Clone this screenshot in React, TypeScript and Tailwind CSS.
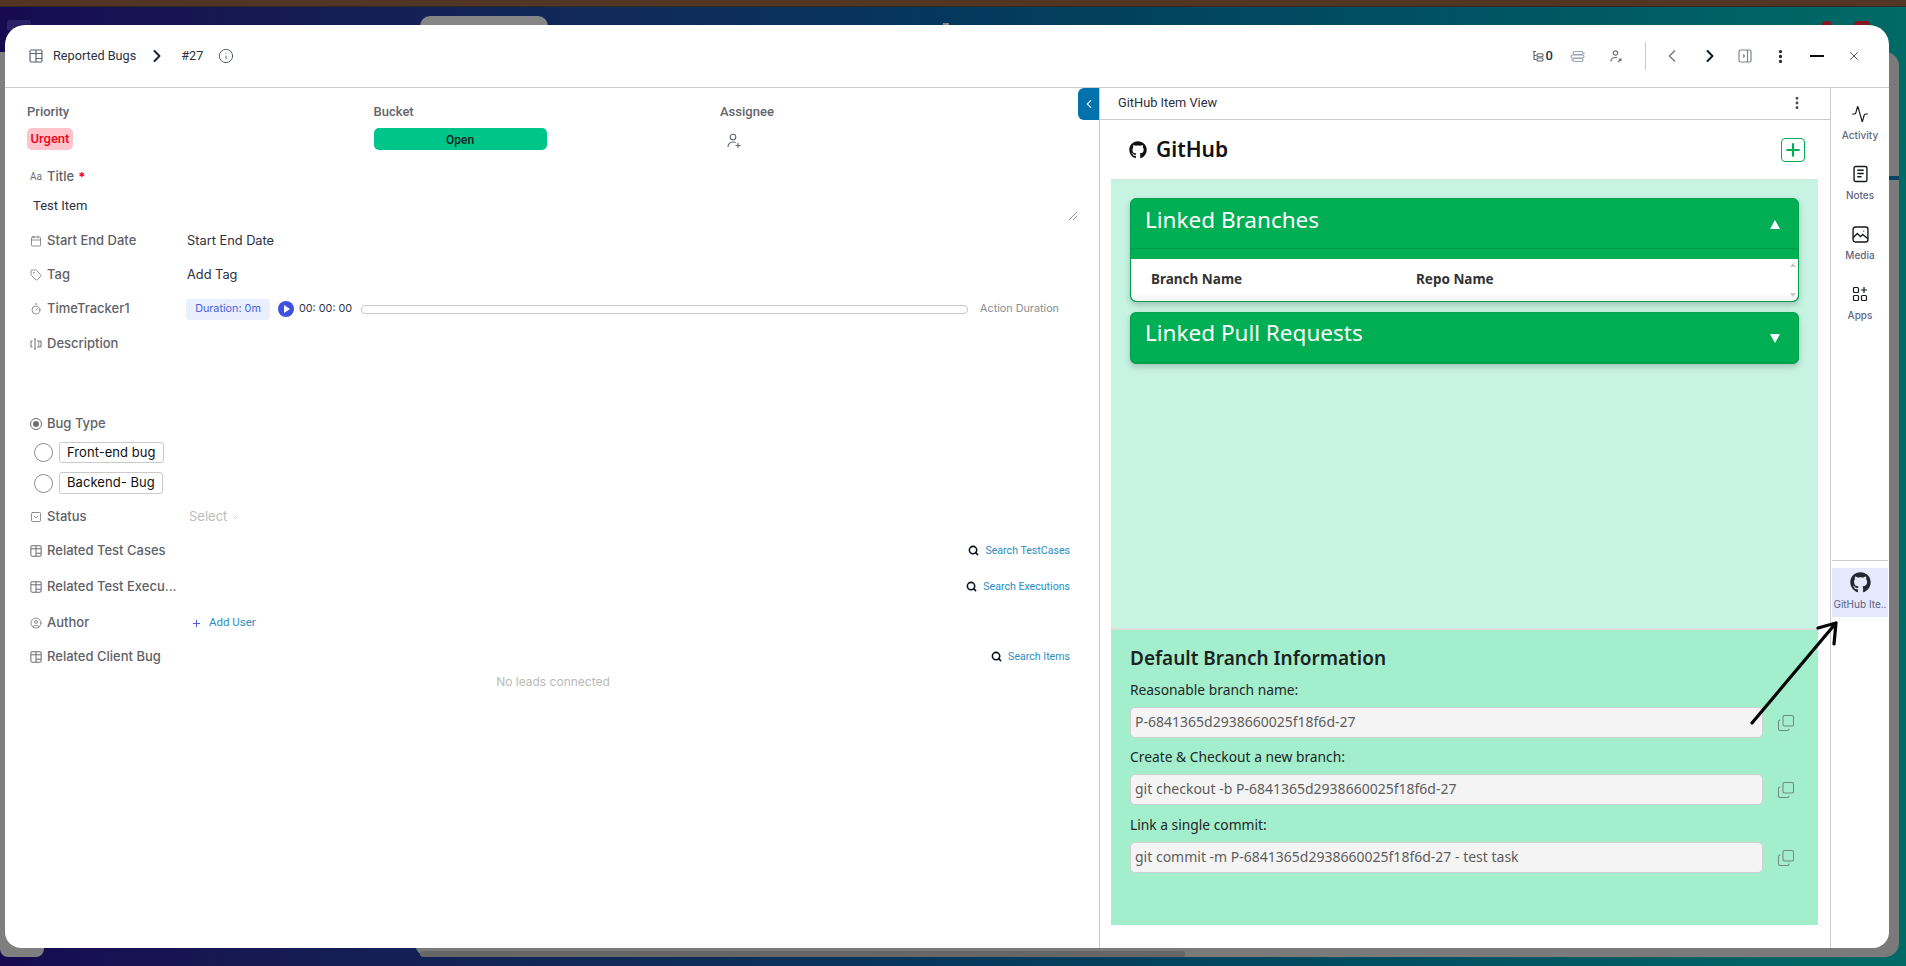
import type { ReactNode } from 'react';
import {
  Activity,
  Calendar,
  ChevronDown,
  ChevronLeft,
  ChevronRight,
  CircleUser,
  Copy,
  EllipsisVertical,
  Info,
  Plus,
  Search,
  SquareChevronDown,
  Tag,
  Timer,
  X,
} from 'lucide-react';
import { FaGithub } from 'react-icons/fa';

const ubuntu = "font-['Noto_Sans',sans-serif]";

function TableIcon({ className }: { className?: string }) {
  return (
    <svg viewBox="0 0 14 14" fill="none" stroke="currentColor" strokeWidth="1.2" className={className}>
      <rect x="1" y="1" width="12" height="12" rx="1.5" />
      <path d="M1 4.5h12M7 1v12M7 9.5h6" />
    </svg>
  );
}

function Row({ icon, label, children, className }: { icon: ReactNode; label: string; children?: ReactNode; className: string }) {
  return (
    <div className={`flex items-center pl-[25px] pr-[29px] ${className}`}>
      <span className="flex w-[12px] shrink-0 items-center justify-center text-[#6b6e75]">{icon}</span>
      <span className="ml-[5px] w-[140px] shrink-0 whitespace-nowrap text-[13px] font-medium text-[#5f6268]">{label}</span>
      {children}
    </div>
  );
}

function SearchLink({ label }: { label: string }) {
  return (
    <div className="ml-auto flex items-center gap-[6px] font-['Roboto',sans-serif] text-[10.6px] text-[#2a8cc0]">
      <Search className="h-[11px] w-[11px] text-[#0b1020]" strokeWidth={3.4} />
      {label}
    </div>
  );
}

function BugOption({ label, className }: { label: string; className: string }) {
  return (
    <div className={`ml-[29px] flex items-center gap-[6px] ${className}`}>
      <span className="h-[19px] w-[19px] rounded-full border border-[#8d8d8d]" />
      <span className="flex h-full items-center rounded-[3px] border border-[#c9c9c9] px-[7px] text-[13px] tracking-[0.05px] text-[#111]">{label}</span>
    </div>
  );
}

function HeaderTools() {
  return (
    <div className="ml-auto flex items-center">
      <svg viewBox="0 0 12 12" fill="none" stroke="#5d6470" strokeWidth="1.1" className="h-[12px] w-[12px]">
        <path d="M1 1.5h3M2 1.5v8h2.5M2 5.5h2.5" />
        <rect x="5" y="3.8" width="6" height="3" rx="1" />
        <rect x="5" y="8" width="6" height="3" rx="1" />
      </svg>
      <span className="ml-[2px] font-['Roboto',sans-serif] text-[13px] font-medium text-[#25324a]">0</span>
      <svg viewBox="0 0 16 12" fill="none" stroke="#98a3b5" strokeWidth="1.2" className="ml-[17px] h-[13px] w-[16px]">
        <rect x="3" y="1" width="10" height="3" rx="1.5" />
        <rect x="1" y="4.5" width="13" height="3" rx="1.5" />
        <rect x="3" y="8" width="10" height="3" rx="1.5" />
        <path d="M13 2.5h2M1 9.5h2" />
      </svg>
      <svg viewBox="0 0 12 13" fill="none" stroke="#6a7280" strokeWidth="1.2" className="ml-[24px] h-[13px] w-[12px]">
        <circle cx="5.5" cy="3" r="2.2" />
        <path d="M1 11.5c0-2.5 1.6-4 4.5-4 .6 0 1.2.1 1.6.2M8 12l3-3M9 9h2v2" />
      </svg>
      <span className="ml-[23px] h-[28px] w-px bg-[#c9cbd0]" />
      <ChevronLeft className="ml-[16px] h-[20px] w-[20px] text-[#7b8088]" strokeWidth={2} />
      <ChevronRight className="ml-[18px] h-[20px] w-[20px] text-[#111827]" strokeWidth={2.4} />
      <svg viewBox="0 0 14 14" fill="none" stroke="#7e8590" strokeWidth="1.2" className="ml-[18px] h-[14px] w-[14px]">
        <rect x="1" y="1" width="12" height="12" rx="1.5" />
        <path d="M9.5 1v12M5 5.5 6.5 7 5 8.5" />
      </svg>
      <EllipsisVertical className="ml-[20px] h-[17px] w-[17px] text-[#1c2230]" strokeWidth={2.6} />
      <span className="ml-[21px] h-[2px] w-[14px] bg-[#0c0c0c]" />
      <X className="ml-[23px] h-[14px] w-[14px] text-[#4b5563]" strokeWidth={1.7} />
    </div>
  );
}

function SideItem({ icon, label, className }: { icon: ReactNode; label: string; className?: string }) {
  return (
    <div className={`flex flex-col items-center text-[10px] font-medium text-[#62677f] ${className ?? ''}`}>
      <span className="flex h-[20px] items-center text-[#15181e]">{icon}</span>
      <span className="mt-[4px] leading-[14px]">{label}</span>
    </div>
  );
}

function BranchField({ label, value, className }: { label: string; value: string; className: string }) {
  return (
    <div className={className}>
      <div className="flex h-[20px] items-center text-[13.8px] text-[#1f2726]">{label}</div>
      <div className="mt-[7px] flex items-center">
        <div className="flex h-[31px] w-[633px] items-center rounded-[5px] border border-[#cfd2d1] bg-[#f4f4f4] pb-[2px] pl-[4px] text-[14px] text-[#5d5d5d]">{value}</div>
        <Copy className="ml-[14px] h-[18px] w-[18px] -scale-x-100 rotate-180 text-[#6f8a7f]" strokeWidth={1.4} />
      </div>
    </div>
  );
}

export default function App() {
  return (
    <div className="relative h-[966px] w-[1906px] overflow-hidden bg-gradient-to-r from-[#170a50] via-[#04385c] to-[#006a66] font-['Inter',sans-serif]">
      <div className="h-[7px] border-b border-[#2d2a26] bg-[#533524]" />

      {/* windows lying behind the dialog */}
      <div className="absolute left-0 top-[52px] h-[905px] w-[44px] rounded-b-[8px] bg-[#7f7f7f]" />
      <div className="absolute left-[415px] top-[52px] h-[905px] w-[1484px] rounded-[14px] bg-[#7a7a7a]" />
      <div className="absolute left-[420px] top-[16px] h-[30px] w-[128px] rounded-[10px] bg-[#868686]" />
      <div className="absolute left-[7px] top-[20px] h-[10px] w-[24px] rounded-t-[3px] bg-[#2a2168]" />
      <div className="absolute left-[943px] top-[23px] h-[4px] w-[6px] bg-[#8a8a8a]" />
      <div className="absolute left-[420px] top-[951px] h-[6px] w-[765px] rounded-[3px] bg-[#666]" />
      <div className="absolute left-[1889px] top-[176px] h-[4px] w-[10px] bg-[#054560]" />
      <div className="absolute left-[1822px] top-[21px] h-[8px] w-[10px] rounded-full bg-[#8b1520]" />
      <div className="absolute left-[1854px] top-[21px] h-[8px] w-[16px] rounded-full bg-[#8b1520]" />

      {/* dialog */}
      <div className="absolute left-[5px] top-[25px] flex h-[923px] w-[1884px] flex-col overflow-hidden rounded-b-[16px] rounded-t-[20px] bg-white">
        <header className="flex h-[63px] shrink-0 items-center border-b border-[#c9cbd0] pl-[24px] pr-[28px] font-['Roboto',sans-serif]">
          <TableIcon className="h-[14px] w-[14px] text-[#5b6270]" />
          <span className="ml-[10px] text-[12.7px] text-[#2b3040]">Reported Bugs</span>
          <ChevronRight className="ml-[11px] h-[20px] w-[20px] text-[#1b2235]" strokeWidth={2.4} />
          <span className="ml-[14px] text-[12.7px] text-[#2b3040]">#27</span>
          <Info className="ml-[15px] h-[16px] w-[16px] text-[#5c6270]" strokeWidth={1.5} />
          <HeaderTools />
        </header>

        <div className="flex min-h-0 flex-1">
          {/* left form */}
          <section className="w-[1094px] shrink-0">
            <div className="grid grid-cols-[346.5px_346.5px_1fr] pl-[22px] pt-[16px] font-['Roboto',sans-serif]">
              <div>
                <div className="text-[13px] font-medium leading-[16px] text-[#63666c]">Priority</div>
                <div className="mt-[8px] flex h-[22px] w-[46px] items-center justify-center rounded-[5px] bg-[#ffc4cb] text-[13px] font-medium text-[#f0021f]">Urgent</div>
              </div>
              <div>
                <div className="text-[13px] font-medium leading-[16px] text-[#63666c]">Bucket</div>
                <div className="mt-[8px] flex h-[22px] w-[173px] items-center justify-center rounded-[5px] bg-[#00c58a] pt-[1px] text-[12px] font-medium text-[#10231c]">Open</div>
              </div>
              <div>
                <div className="text-[13px] font-medium leading-[16px] text-[#63666c]">Assignee</div>
                <svg viewBox="0 0 16 16" fill="none" stroke="#5b6270" strokeWidth="1.1" className="ml-[6px] mt-[13px] h-[16px] w-[16px]">
                  <circle cx="7" cy="4" r="2.8" />
                  <path d="M2 14c0-3 2-5 5-5 1 0 2 .2 2.6.7M12 10v5M9.5 12.5h5" />
                </svg>
              </div>
            </div>

            <div className="mt-[16px] flex h-[22px] items-center pl-[25px]">
              <span className="w-[12px] font-['Roboto',sans-serif] text-[10px] leading-none text-[#6b6e75]">Aa</span>
              <span className="ml-[5px] text-[13px] font-medium text-[#5f6268]">Title</span>
              <span className="ml-[4px] text-[13px] font-bold leading-none text-[#f0021f]">*</span>
            </div>
            <div className="mt-[8px] flex h-[26px] items-start justify-between pl-[28px] pr-[22px]">
              <span className="flex h-[20px] items-center font-['Roboto',sans-serif] text-[13px] text-[#2b3040]">Test Item</span>
              <svg viewBox="0 0 8 8" stroke="#777" strokeWidth="0.8" className="mt-[16px] h-[8px] w-[8px]">
                <path d="M0 8 8 0M4 8l4-4" />
              </svg>
            </div>

            <Row className="mt-[2px] h-[34px]" icon={<Calendar className="h-[12px] w-[12px]" strokeWidth={1.5} />} label="Start End Date">
              <span className="text-[12.8px] text-[#2b3040]">Start End Date</span>
            </Row>
            <Row className="h-[34px]" icon={<Tag className="h-[12px] w-[12px]" strokeWidth={1.5} />} label="Tag">
              <span className="text-[12.8px] text-[#2b3040]">Add Tag</span>
            </Row>
            <Row className="h-[34px] !pr-[40px]" icon={<Timer className="h-[12px] w-[12px]" strokeWidth={1.5} />} label="TimeTracker1">
              <span className="-ml-[1px] flex h-[21px] w-[84px] items-center justify-center rounded-[4px] bg-[#e9effd] text-[10.8px] text-[#4a62dd]">Duration: 0m</span>
              <span className="ml-[8px] flex h-[16px] w-[16px] items-center justify-center rounded-full bg-[#3f51e0]">
                <span className="ml-[2px] h-0 w-0 border-y-[4px] border-l-[6px] border-y-transparent border-l-white" />
              </span>
              <span className="ml-[5px] text-[10.8px] text-[#30364a]">00: 00: 00</span>
              <span className="ml-[9px] h-[9px] flex-1 rounded-[4px] border border-[#c8c8c8]" />
              <span className="ml-[12px] text-[10.8px] text-[#8a8d93]">Action Duration</span>
            </Row>
            <Row
              className="h-[35px]"
              icon={
                <svg viewBox="0 0 12 12" fill="none" stroke="currentColor" strokeWidth="1" className="h-[12px] w-[12px]">
                  <path d="M2.5 3H1v6h1.5M5 1v10M4 1h2M4 11h2M7 3h4v6H7M8 5h1.5M8 7h1.5" />
                </svg>
              }
              label="Description"
            />

            <Row
              className="mt-[53px] h-[20px]"
              icon={
                <span className="flex h-[12px] w-[12px] items-center justify-center rounded-full border border-[#6b6e75]">
                  <span className="h-[6px] w-[6px] rounded-full bg-[#6b6e75]" />
                </span>
              }
              label="Bug Type"
            />
            <BugOption className="mt-[8px] h-[21px]" label="Front-end bug" />
            <BugOption className="mt-[9px] h-[22px]" label="Backend- Bug" />

            <Row className="mt-[6px] h-[34px]" icon={<SquareChevronDown className="h-[12px] w-[12px]" strokeWidth={1.5} />} label="Status">
              <span className="ml-[2px] flex items-center gap-[4px] text-[13px] text-[#bcbcbc]">
                Select <ChevronDown className="h-[9px] w-[9px]" />
              </span>
            </Row>
            <Row className="h-[34px]" icon={<TableIcon className="h-[12px] w-[12px]" />} label="Related Test Cases">
              <SearchLink label="Search TestCases" />
            </Row>
            <Row className="mt-[2px] h-[34px]" icon={<TableIcon className="h-[12px] w-[12px]" />} label="Related Test Execu...">
              <SearchLink label="Search Executions" />
            </Row>
            <Row className="mt-[2px] h-[34px]" icon={<CircleUser className="h-[12px] w-[12px]" strokeWidth={1.5} />} label="Author">
              <span className="ml-[4px] flex items-center gap-[7px] font-['Roboto',sans-serif] text-[11.5px] text-[#2a8cc0]">
                <Plus className="h-[11px] w-[11px] text-[#3f51e0]" strokeWidth={2} />
                Add User
              </span>
            </Row>
            <Row className="h-[34px]" icon={<TableIcon className="h-[12px] w-[12px]" />} label="Related Client Bug">
              <SearchLink label="Search Items" />
            </Row>
            <div className="flex h-[16px] justify-center pl-[2px] text-[12px] leading-[16px] text-[#b9b9b9]">No leads connected</div>
          </section>

          {/* github panel */}
          <section className="relative flex w-[731px] shrink-0 flex-col border-l border-[#c9cbd0]">
            <div className="absolute left-[-22px] top-0 flex h-[32px] w-[21px] items-center justify-center rounded-l-[6px] bg-[#0272ad] text-[#d9eef8]">
              <ChevronLeft className="h-[14px] w-[14px]" strokeWidth={2} />
            </div>
            <div className="flex h-[32px] shrink-0 items-center justify-between border-b border-[#c9cbd0] pb-[1px] pl-[18px] pr-[25px] font-['Roboto',sans-serif] text-[12.8px] text-[#2b3040]">
              GitHub Item View
              <EllipsisVertical className="h-[16px] w-[16px] text-[#3c4354]" strokeWidth={2.2} />
            </div>
            <div className={`flex h-[59px] shrink-0 items-center justify-between pl-[29px] pr-[25px] ${ubuntu}`}>
              <div className="flex items-center gap-[9px] text-[21px] font-semibold text-[#111]">
                <FaGithub className="h-[18px] w-[18px]" />
                GitHub
              </div>
              <span className="flex h-[24px] w-[24px] items-center justify-center rounded-[4px] border border-[#00ae53] text-[#00ae53]">
                <Plus className="h-[20px] w-[20px]" strokeWidth={2.6} />
              </span>
            </div>

            <div className={`ml-[11px] flex h-[449px] w-[707px] shrink-0 flex-col border-t border-[#d6e7df] bg-[#c7f3e3] px-[19px] pt-[18px] ${ubuntu}`}>
              <div className="rounded-[6px] border border-[#00a04c] bg-[#00ae53] shadow-[0_3px_6px_rgba(0,0,0,0.2)]">
                <div className="flex h-[50px] items-center justify-between border-b border-[#009a49] pb-[8px] pl-[14px] pr-[18px] text-[22.5px] text-white">
                  Linked Branches
                  <span className="mt-[10px] h-0 w-0 border-x-[5px] border-b-[9px] border-x-transparent border-b-white" />
                </div>
                <div className="relative mt-[10px] flex h-[42px] items-center rounded-b-[6px] bg-white pb-[2px] text-[13.5px] font-bold text-[#333] shadow-[inset_0_-4px_6px_rgba(0,0,0,0.05)]">
                  <span className="ml-[20px] w-[265px]">Branch Name</span>
                  <span>Repo Name</span>
                  <span className="absolute right-[2px] top-[4px] h-0 w-0 border-x-[3px] border-b-[4px] border-x-transparent border-b-[#c9c9c9]" />
                  <span className="absolute bottom-[4px] right-[2px] h-0 w-0 border-x-[3px] border-t-[4px] border-x-transparent border-t-[#c9c9c9]" />
                </div>
              </div>
              <div className="mt-[10px] flex h-[52px] items-center justify-between rounded-[6px] border border-b-2 border-[#00a04c] bg-[#00ae53] pb-[9px] pl-[14px] pr-[18px] text-[22.5px] text-white shadow-[0_3px_6px_rgba(0,0,0,0.2)]">
                Linked Pull Requests
                <span className="mt-[11px] h-0 w-0 border-x-[5px] border-t-[9px] border-x-transparent border-t-white" />
              </div>
            </div>

            <div className={`ml-[11px] h-[297px] w-[707px] shrink-0 border-t-2 border-[#dcdedd] bg-[#a3eecd] pl-[19px] pt-[14px] ${ubuntu}`}>
              <div className="flex h-[28px] items-center text-[19px] font-semibold text-[#1c2423]">Default Branch Information</div>
              <BranchField className="mt-[8px]" label="Reasonable branch name:" value="P-6841365d2938660025f18f6d-27" />
              <BranchField className="mt-[9px]" label="Create & Checkout a new branch:" value="git checkout -b P-6841365d2938660025f18f6d-27" />
              <BranchField className="mt-[10px]" label="Link a single commit:" value="git commit -m P-6841365d2938660025f18f6d-27 - test task" />
            </div>
          </section>

          {/* right rail */}
          <aside className="flex min-w-0 flex-1 flex-col border-l border-[#c9cbd0] px-[1px] pt-[16px]">
            <SideItem label="Activity" icon={<Activity className="h-[18px] w-[18px]" strokeWidth={1.6} />} />
            <SideItem
              className="mt-[22px]"
              label="Notes"
              icon={
                <svg viewBox="0 0 14 16" fill="none" stroke="currentColor" strokeWidth="1.3" className="h-[18px] w-[15px]">
                  <rect x="1" y="1" width="12" height="14" rx="1.5" />
                  <path d="M4 4.5h6M4 7.5h6M4 10.5h4" />
                </svg>
              }
            />
            <SideItem
              className="mt-[22px]"
              label="Media"
              icon={
                <svg viewBox="0 0 16 16" fill="none" stroke="currentColor" strokeWidth="1.3" className="h-[17px] w-[17px]">
                  <rect x="1" y="1" width="14" height="14" rx="2" />
                  <path d="M1 11l4-4 3 3 2-2 5 4M11 4.5v.6" />
                </svg>
              }
            />
            <SideItem
              className="mt-[22px]"
              label="Apps"
              icon={
                <svg viewBox="0 0 16 16" fill="none" stroke="currentColor" strokeWidth="1.2" className="h-[16px] w-[16px]">
                  <rect x="1.5" y="1.5" width="5" height="5" rx="1" />
                  <rect x="1.5" y="9.5" width="5" height="5" rx="1" />
                  <rect x="9.5" y="9.5" width="5" height="5" rx="1" />
                  <path d="M12 1v6M9 4h6" />
                </svg>
              }
            />
            <div className="mt-[238px] h-px bg-[#c9cbd0]" />
            <div className="mt-[7px] flex h-[49px] flex-col items-center bg-[#e4e9fd] pt-[4px] text-[10px] text-[#5b6080]">
              <FaGithub className="h-[21px] w-[21px] text-[#23272e]" />
              <span className="mt-[4px] leading-[14px]">GitHub Ite..</span>
            </div>
          </aside>
        </div>
      </div>

      {/* annotation arrow */}
      <svg viewBox="0 0 100 115" fill="none" stroke="#050505" strokeWidth="3.2" strokeLinecap="round" strokeLinejoin="round" className="absolute left-[1745px] top-[615px] h-[115px] w-[100px]">
        <path d="M7 108 91 8M73 13l18-5-2 21" />
      </svg>
    </div>
  );
}
